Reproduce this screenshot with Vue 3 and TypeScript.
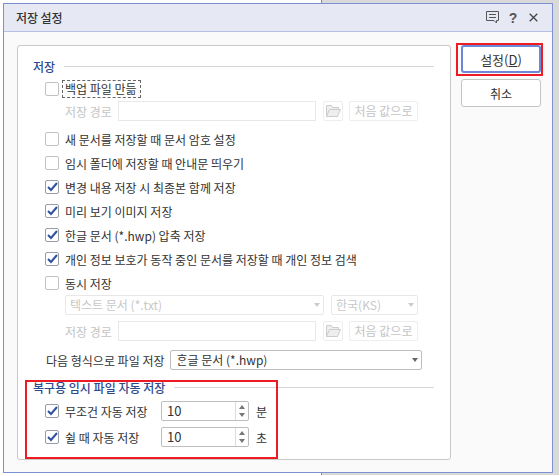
<script setup lang="ts">
const options = [
  { label: '새 문서를 저장할 때 문서 암호 설정', checked: false },
  { label: '임시 폴더에 저장할 때 안내문 띄우기', checked: false },
  { label: '변경 내용 저장 시 최종본 함께 저장', checked: true },
  { label: '미리 보기 이미지 저장', checked: true },
  { label: '한글 문서 (*.hwp) 압축 저장', checked: true },
  { label: '개인 정보 보호가 동작 중인 문서를 저장할 때 개인 정보 검색', checked: true },
]
const autosave = [
  { label: '무조건 자동 저장', unit: '분' },
  { label: '쉴 때 자동 저장', unit: '초' },
]
</script>

<template>
  <div class="page">
    <div class="backdrop"></div>
    <div class="window">
      <header class="titlebar">
        <span class="title">저장 설정</span>
        <div class="title-icons">
          <svg width="13" height="13" viewBox="0 0 13 13" fill="none" stroke="#555" stroke-width="1">
            <path d="M.5 .5h12v9h-2v2.5l-2.5-2.5h-7.5z" />
            <path d="M3 3.5h7M3 6.5h7" />
          </svg>
          <span class="help">?</span>
          <svg width="9" height="9" viewBox="0 0 9 9" fill="none" stroke="#444" stroke-width="1.3">
            <path d="M.7 .7l7.6 7.6M8.3 .7l-7.6 7.6" />
          </svg>
        </div>
      </header>
      <div class="content">
        <main class="panel">
          <div class="section-head"><span>저장</span><i></i></div>
          <div class="row first">
            <span class="box"></span>
            <span class="focus">백업 파일 만듦</span>
          </div>
          <div class="path-row">
            <span class="dim">저장 경로</span>
            <span class="field path"></span>
            <span class="folder">
              <svg width="17" height="14" viewBox="0 0 17 14" fill="#eee" stroke="#ccc" stroke-width="1">
                <path d="M1.5 12.5v-11h5l1 2h6v2" />
                <path d="M1.5 12.5l3-7h11l-3 7z" />
              </svg>
            </span>
            <span class="reset">처음 값으로</span>
          </div>
          <div v-for="(o, i) in options" :key="o.label" class="row opt" :class="{ lead: i === 0 }">
            <span class="box" :class="{ on: o.checked }">
              <svg v-if="o.checked" width="11" height="10" viewBox="0 0 11 10" fill="none" stroke="#2f4f9f" stroke-width="2">
                <path d="M1 5l3 3 6-7" />
              </svg>
            </span>
            <span class="text">{{ o.label }}</span>
          </div>
          <div class="row opt">
            <span class="box"></span>
            <span class="text">동시 저장</span>
          </div>
          <div class="select-row">
            <span class="field sel wide">텍스트 문서 (*.txt)<b class="arrow light"></b></span>
            <span class="field sel narrow">한국(KS)<b class="arrow light"></b></span>
          </div>
          <div class="path-row second">
            <span class="dim">저장 경로</span>
            <span class="field path"></span>
            <span class="folder">
              <svg width="17" height="14" viewBox="0 0 17 14" fill="#eee" stroke="#ccc" stroke-width="1">
                <path d="M1.5 12.5v-11h5l1 2h6v2" />
                <path d="M1.5 12.5l3-7h11l-3 7z" />
              </svg>
            </span>
            <span class="reset">처음 값으로</span>
          </div>
          <div class="format-row">
            <span class="text">다음 형식으로 파일 저장</span>
            <span class="format">ᄒᆞᆫ글 문서 (*.hwp)<b class="arrow"></b></span>
          </div>
          <div class="section-head recover"><span>복구용 임시 파일 자동 저장</span><i></i></div>
          <div v-for="a in autosave" :key="a.label" class="auto-row">
            <span class="box on">
              <svg width="11" height="10" viewBox="0 0 11 10" fill="none" stroke="#2f4f9f" stroke-width="2">
                <path d="M1 5l3 3 6-7" />
              </svg>
            </span>
            <span class="text auto-label">{{ a.label }}</span>
            <span class="spin">
              <span class="num">10</span>
              <span class="btns"><em class="up"></em><em class="down"></em></span>
            </span>
            <span class="text unit">{{ a.unit }}</span>
          </div>
        </main>
        <aside class="actions">
          <button class="btn primary">설정(<u>D</u>)</button>
          <button class="btn">취소</button>
        </aside>
      </div>
    </div>
    <div class="mark mark-btn"></div>
    <div class="mark mark-auto"></div>
  </div>
</template>

<style>
body { margin: 0; }
</style>

<style scoped>
.page {
  position: relative;
  width: 559px;
  height: 475px;
  background: #fff;
  overflow: hidden;
  box-sizing: border-box;
  padding: 3px 0 0 3px;
  font-family: "Noto Sans CJK KR", "Noto Sans", sans-serif;
  font-size: 12px;
  color: #333;
}
.backdrop {
  position: absolute;
  left: 321px;
  top: 0;
  right: 0;
  bottom: 0;
  background: #d9d9d9;
  border-left: 1px solid #888;
}
.window {
  position: relative;
  width: 550px;
  height: 470px;
  box-sizing: border-box;
  border: 1px solid #7c91d2;
  background: #fafafa;
}
.titlebar {
  height: 28px;
  box-sizing: border-box;
  background: #e6e9f4;
  border-bottom: 1px solid #b6c2e4;
  display: flex;
  align-items: center;
  justify-content: space-between;
  padding: 0 14px 0 12px;
}
.title { font-weight: 500; color: #333; letter-spacing: -.1px; }
.title-icons { display: flex; align-items: center; gap: 8px; }
.help { font: bold 14px "Liberation Sans", sans-serif; color: #555; width: 12px; margin-right: 2px; text-align: center; }
.content { display: flex; padding: 13px 0 0 13px; align-items: flex-start; }
.panel {
  width: 434px;
  height: 415px;
  box-sizing: border-box;
  background: #fff;
  border: 1px solid #c8c8c8;
  border-radius: 3px;
  padding: 13px 16px 0 15px;
}
.section-head { display: flex; align-items: center; height: 14px; color: #2d4a8f; font-weight: 500; gap: 9px; }
.section-head i { flex: 1; height: 1px; background: #d6d6d6; }
.row { display: flex; align-items: center; height: 18px; padding-left: 12px; gap: 6px; }
.first { margin-top: 7px; gap: 3px; }
.opt { margin-top: 6px; }
.opt.lead { margin-top: 9px; }
.box {
  box-sizing: border-box;
  width: 14px;
  height: 14px;
  border: 1px solid #c2c2c2;
  border-radius: 2px;
  background: #fff;
  display: inline-flex;
  align-items: center;
  justify-content: center;
  flex: none;
}
.box.on { border-color: #9a9ca6; }
.focus { box-sizing: border-box; border: 1px dashed #666; padding: 0 2px; width: 79px; height: 18px; line-height: 16px; white-space: nowrap; }
.text { white-space: nowrap; }
.path-row { display: flex; align-items: center; height: 20px; margin: 3px 0 0 32px; }
.path-row.second { margin-top: 6px; }
.dim { color: #c4c4c4; width: 53px; white-space: nowrap; }
.field {
  box-sizing: border-box;
  border: 1px solid #e8e8e8;
  height: 20px;
  background: #fff;
}
.path { width: 198px; }
.folder {
  box-sizing: border-box;
  width: 20px;
  height: 20px;
  margin-left: 7px;
  border: 1px solid #eee;
  border-radius: 2px;
  display: flex;
  align-items: center;
  justify-content: center;
}
.reset {
  box-sizing: border-box;
  width: 69px;
  height: 20px;
  margin-left: 6px;
  border: 1px solid #eee;
  border-radius: 2px;
  color: #c4c4c4;
  text-align: center;
  line-height: 18px;
  white-space: nowrap;
}
.select-row { display: flex; gap: 7px; margin: 3px 0 0 32px; }
.sel {
  position: relative;
  color: #c8c8c8;
  border-radius: 2px;
  padding-left: 4px;
  line-height: 18px;
}
.wide { width: 259px; }
.narrow { width: 87px; }
.arrow {
  position: absolute;
  right: 3px;
  top: 7px;
  border-left: 3.5px solid transparent;
  border-right: 3.5px solid transparent;
  border-top: 4px solid #666;
}
.arrow.light { border-top-color: #ccc; }
.format-row { display: flex; align-items: center; margin: 9px 0 0 13px; height: 20px; gap: 6px; }
.format {
  position: relative;
  box-sizing: border-box;
  width: 252px;
  height: 20px;
  border: 1px solid #bdbdbd;
  border-radius: 2px;
  padding-left: 5px;
  line-height: 18px;
  white-space: nowrap;
}
.recover { margin-top: 10px; }
.auto-row { display: flex; align-items: center; height: 20px; margin-top: 6px; padding-left: 12px; }
.recover + .auto-row { margin-top: 7px; }
.auto-label { margin-left: 6px; width: 96px; }
.spin {
  box-sizing: border-box;
  display: flex;
  width: 88px;
  height: 20px;
  border: 1px solid #bdbdbd;
  border-radius: 2px;
}
.num { flex: 1; padding-left: 5px; line-height: 18px; font-size: 13px; }
.btns { width: 13px; border-left: 1px solid #ddd; display: flex; flex-direction: column; align-items: center; justify-content: space-between; padding: 3px 0; box-sizing: border-box; }
.up, .down { display: block; width: 0; height: 0; border-left: 3.5px solid transparent; border-right: 3.5px solid transparent; }
.up { border-bottom: 4px solid #777; }
.down { border-top: 4px solid #777; }
.unit { margin-left: 7px; }
.actions { display: flex; flex-direction: column; gap: 6px; margin: 0 0 0 10px; }
.btn {
  box-sizing: border-box;
  width: 80px;
  height: 28px;
  background: #fff;
  border: 1px solid #c4c4c4;
  border-radius: 3px;
  font: inherit;
  color: #333;
  padding: 0;
}
.primary { border: 2px solid #6d86d6; font-size: 13px; }
.mark { position: absolute; box-sizing: border-box; border: 2px solid #ed1c24; }
.mark-btn { left: 456px; top: 43px; width: 87px; height: 33px; }
.mark-auto { left: 25px; top: 380px; width: 253px; height: 79px; }
</style>
